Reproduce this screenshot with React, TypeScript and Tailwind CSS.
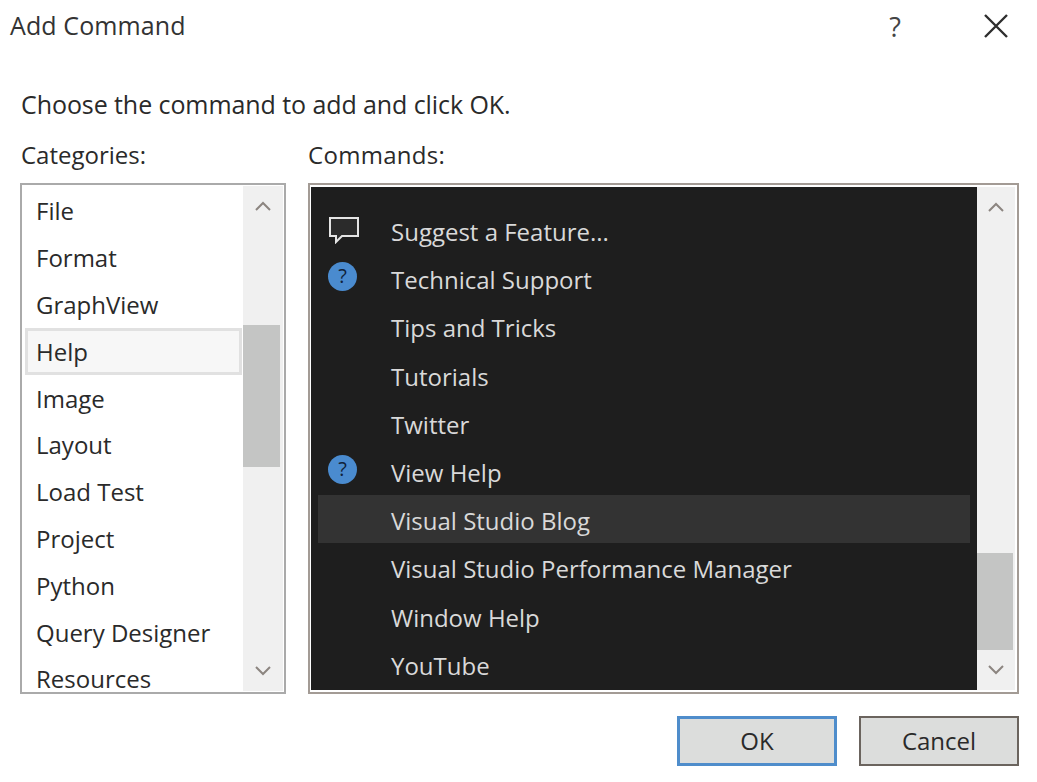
import * as React from "react";

const font = "font-['Open_Sans','Noto_Sans',sans-serif]";

const categories = ["File", "Format", "GraphView", "Help", "Image", "Layout", "Load Test", "Project", "Python", "Query Designer", "Resources"];

const commands: { label: string; icon?: "chat" | "help"; active?: boolean }[] = [
  { label: "Suggest a Feature...", icon: "chat" },
  { label: "Technical Support", icon: "help" },
  { label: "Tips and Tricks" },
  { label: "Tutorials" },
  { label: "Twitter" },
  { label: "View Help", icon: "help" },
  { label: "Visual Studio Blog", active: true },
  { label: "Visual Studio Performance Manager" },
  { label: "Window Help" },
  { label: "YouTube" },
];

function Chevron({ up }: { up?: boolean }) {
  return (
    <svg width="16" height="10" viewBox="0 0 16 10" fill="none" stroke="#8c8580" strokeWidth="2">
      <path d={up ? "M1 9 L8 2 L15 9" : "M1 1 L8 8 L15 1"} />
    </svg>
  );
}

function ChatIcon() {
  return (
    <svg className="mb-[5px]" width="32" height="28" viewBox="0 0 32 28" fill="none" stroke="#e4e4e4" strokeWidth="2">
      <path d="M2 2 H30 V20 H14 L8 26 V20 H2 Z" fill="#2b2b2b" />
    </svg>
  );
}

function HelpIcon() {
  return (
    <span className="mb-[8px] flex h-[29px] w-[29px] items-center justify-center rounded-full bg-[#4a8bcf] text-[20px] leading-none text-[#10223a]">?</span>
  );
}

function Scrollbar({ width, thumbWidth, topGap, thumb, bottomGap }: { width: string; thumbWidth: string; topGap: string; thumb: string; bottomGap: string }) {
  return (
    <div className={`flex shrink-0 flex-col bg-[#f0f0f0] ${width}`}>
      <div className="flex h-[40px] w-full shrink-0 items-center justify-center"><Chevron up /></div>
      <div className={`w-full ${topGap}`} />
      <div className={`bg-[#c4c5c4] ${thumbWidth} ${thumb}`} />
      <div className={`w-full ${bottomGap}`} />
      <div className="flex h-[40px] w-full shrink-0 items-center justify-center"><Chevron /></div>
    </div>
  );
}

export default function App() {
  return (
    <div className={`flex h-[782px] w-[1037px] flex-col overflow-hidden bg-white text-[#2a2a2a] ${font}`}>
      <div className="flex h-[52px] shrink-0 items-center pl-[10px] pr-[29px]">
        <span className="text-[25px] tracking-[0.1px] text-[#333]">Add Command</span>
        <span className="ml-auto mr-[83px] text-[27px] leading-none text-[#444]">?</span>
        <svg width="24" height="24" viewBox="0 0 24 24" stroke="#2e2e2e" strokeWidth="2.4">
          <path d="M1 1 L23 23 M23 1 L1 23" />
        </svg>
      </div>

      <div className="flex flex-col px-[18px]">
        <p className="mt-[35px] pl-[3px] text-[25px] leading-[34px] tracking-[-0.08px]">Choose the command to add and click OK.</p>
        <div className="mt-[17px] flex h-[34px] items-center text-[24px]">
          <span className="w-[290px] pl-[3px]">Categories:</span>
          <span className="tracking-[0.3px]">Commands:</span>
        </div>

        <div className="ml-[2px] mt-[11px] flex gap-[22px]">
          <div className="flex h-[511px] w-[266px] border-2 border-[#aaaaaa] bg-white p-[1px]">
            <ul className="h-full min-w-0 flex-1 overflow-hidden pl-[2px] pr-px pt-[2px] text-[24px]">
              {categories.map((name) => (
                <li
                  key={name}
                  className={`flex h-[46.8px] items-center border-[3px] pl-[8px] ${name === "Help" ? "border-[#e1e1e1] bg-[#f7f7f7]" : "border-transparent"}`}
                >
                  {name}
                </li>
              ))}
            </ul>
            <Scrollbar width="w-[40px]" thumbWidth="w-[37px]" topGap="h-[99px]" thumb="h-[142px]" bottomGap="flex-1" />
          </div>

          <div className="flex h-[511px] w-[711px] border-2 border-[#a39b95] bg-white py-[2px] pl-px pr-[2px]">
            <ul className="h-full min-w-0 flex-1 overflow-hidden bg-[#1e1e1e] px-[7px] pt-[19px] text-[24px] text-[#d9d9d9]">
              {commands.map((c) => (
                <li key={c.label} className={`flex h-[48.2px] items-center pl-[9px] pt-[4px] ${c.active ? "bg-[#333333]" : ""}`}>
                  <span className="flex w-[64px] shrink-0 items-center pl-px">
                    {c.icon === "chat" && <ChatIcon />}
                    {c.icon === "help" && <HelpIcon />}
                  </span>
                  {c.label}
                </li>
              ))}
            </ul>
            <Scrollbar width="w-[38px]" thumbWidth="w-[36px]" topGap="flex-1" thumb="h-[97px]" bottomGap="h-[0px]" />
          </div>
        </div>

        <div className="mt-[22px] flex justify-end gap-[22px] text-[24px]">
          <button className="flex h-[50px] w-[160px] items-center justify-center border-[3px] border-[#4f8dcb] bg-[#dcdddc]">OK</button>
          <button className="flex h-[50px] w-[160px] items-center justify-center border-2 border-[#6b645e] bg-[#dcdddc]">Cancel</button>
        </div>
      </div>
    </div>
  );
}
